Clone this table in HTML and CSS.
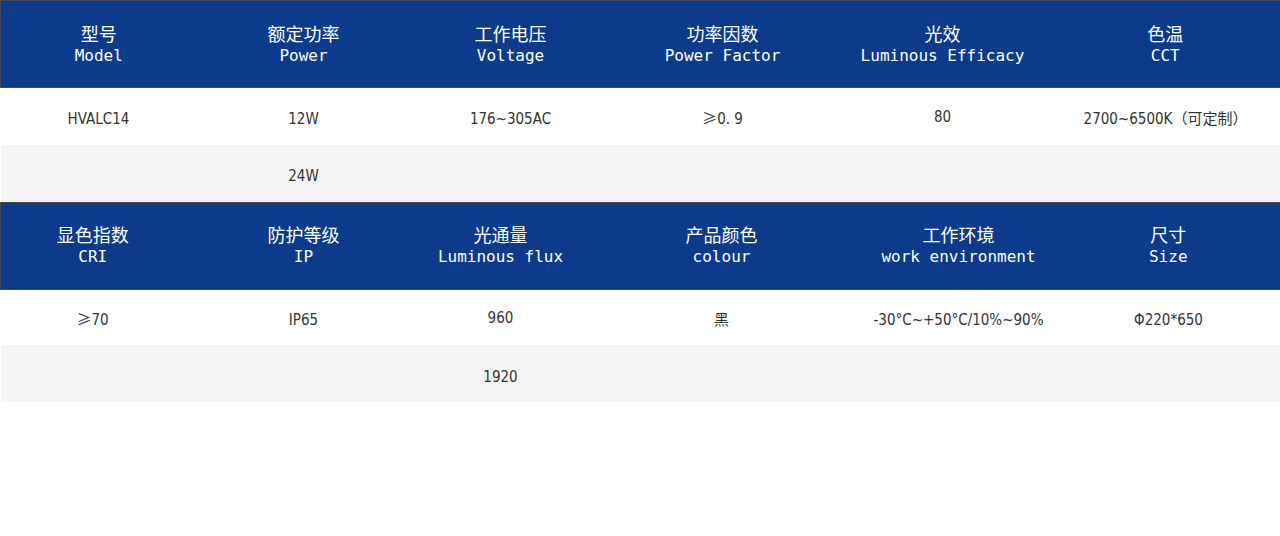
FILE: index.html
```html
<!DOCTYPE html>
<html lang="zh-CN">
<head>
    <meta charset="UTF-8">
    <meta name="viewport" content="width=device-width, initial-scale=1.0">
    <title>HVALC14 参数</title>
    <link rel="stylesheet" href="styles.css">
</head>
<body>
    <table class="spec spec-a">
        <colgroup>
            <col><col><col><col><col><col>
        </colgroup>
        <thead>
            <tr>
                <th><span class="cn">型号</span><span class="en">Model</span></th>
                <th><span class="cn">额定功率</span><span class="en">Power</span></th>
                <th><span class="cn">工作电压</span><span class="en">Voltage</span></th>
                <th><span class="cn">功率因数</span><span class="en">Power Factor</span></th>
                <th><span class="cn">光效</span><span class="en">Luminous Efficacy</span></th>
                <th><span class="cn">色温</span><span class="en">CCT</span></th>
            </tr>
        </thead>
        <tbody>
            <tr>
                <td>HVALC14</td>
                <td>12W</td>
                <td>176~305AC</td>
                <td class="up"><span class="sym">≥</span>0. 9</td>
                <td class="up">80</td>
                <td class="up">2700~6500K（可定制）</td>
            </tr>
            <tr>
                <td></td>
                <td>24W</td>
                <td></td>
                <td></td>
                <td></td>
                <td></td>
            </tr>
        </tbody>
    </table>

    <table class="spec spec-b">
        <colgroup>
            <col><col><col><col><col><col>
        </colgroup>
        <thead>
            <tr>
                <th><span class="cn">显色指数</span><span class="en">CRI</span></th>
                <th><span class="cn">防护等级</span><span class="en">IP</span></th>
                <th><span class="cn">光通量</span><span class="en">Luminous flux</span></th>
                <th><span class="cn">产品颜色</span><span class="en">colour</span></th>
                <th><span class="cn">工作环境</span><span class="en">work environment</span></th>
                <th><span class="cn">尺寸</span><span class="en">Size</span></th>
            </tr>
        </thead>
        <tbody>
            <tr>
                <td class="up"><span class="sym">≥</span>70</td>
                <td>IP65</td>
                <td class="up">960</td>
                <td class="up">黑</td>
                <td>-30°C~+50°C/10%~90%</td>
                <td>Φ220*650</td>
            </tr>
            <tr>
                <td></td>
                <td></td>
                <td>1920</td>
                <td></td>
                <td></td>
                <td></td>
            </tr>
        </tbody>
    </table>
</body>
</html>
```

FILE: styles.css
```css
body {
    margin: 0;
    background: #ffffff;
    font-family: "DejaVu Sans Condensed", "DejaVu Sans", "Noto Sans CJK SC", sans-serif;
}

.spec {
    width: 1280px;
    border-collapse: collapse;
    table-layout: fixed;
}

.spec thead tr {
    border: 1px solid #4a4a4a;
}

.spec th {
    height: 86px;
    padding: 0;
    background-color: #0b3b8a;
    color: #ffffff;
    font-weight: normal;
    text-align: center;
    vertical-align: middle;
}

.spec th .cn {
    display: block;
    font-family: "Noto Sans CJK SC", sans-serif;
    font-size: 18px;
    line-height: 22px;
}

.spec th .en {
    display: block;
    font-family: "DejaVu Sans Mono", "Liberation Mono", monospace;
    font-size: 16px;
    line-height: 23px;
}

.spec td {
    box-sizing: border-box;
    height: 57px;
    padding: 6px 0 0;
    text-align: center;
    vertical-align: middle;
    color: #333333;
    font-size: 15px;
}

.spec td.up {
    padding-bottom: 4px;
}

.spec td .sym {
    font-family: "Noto Sans CJK SC", sans-serif;
}

.spec-b tbody tr:first-child td {
    height: 56px;
}

.spec tbody tr:nth-child(2) td {
    background-color: #f5f5f5;
}

/* column widths, first table */
.spec-a col:nth-child(1) { width: 196px; }
.spec-a col:nth-child(2) { width: 214px; }
.spec-a col:nth-child(3) { width: 200px; }
.spec-a col:nth-child(4) { width: 224px; }
.spec-a col:nth-child(5) { width: 216px; }
.spec-a col:nth-child(6) { width: 230px; }

/* column widths, second table */
.spec-b col:nth-child(1) { width: 184px; }
.spec-b col:nth-child(2) { width: 238px; }
.spec-b col:nth-child(3) { width: 156px; }
.spec-b col:nth-child(4) { width: 286px; }
.spec-b col:nth-child(5) { width: 188px; }
.spec-b col:nth-child(6) { width: 232px; }
```
